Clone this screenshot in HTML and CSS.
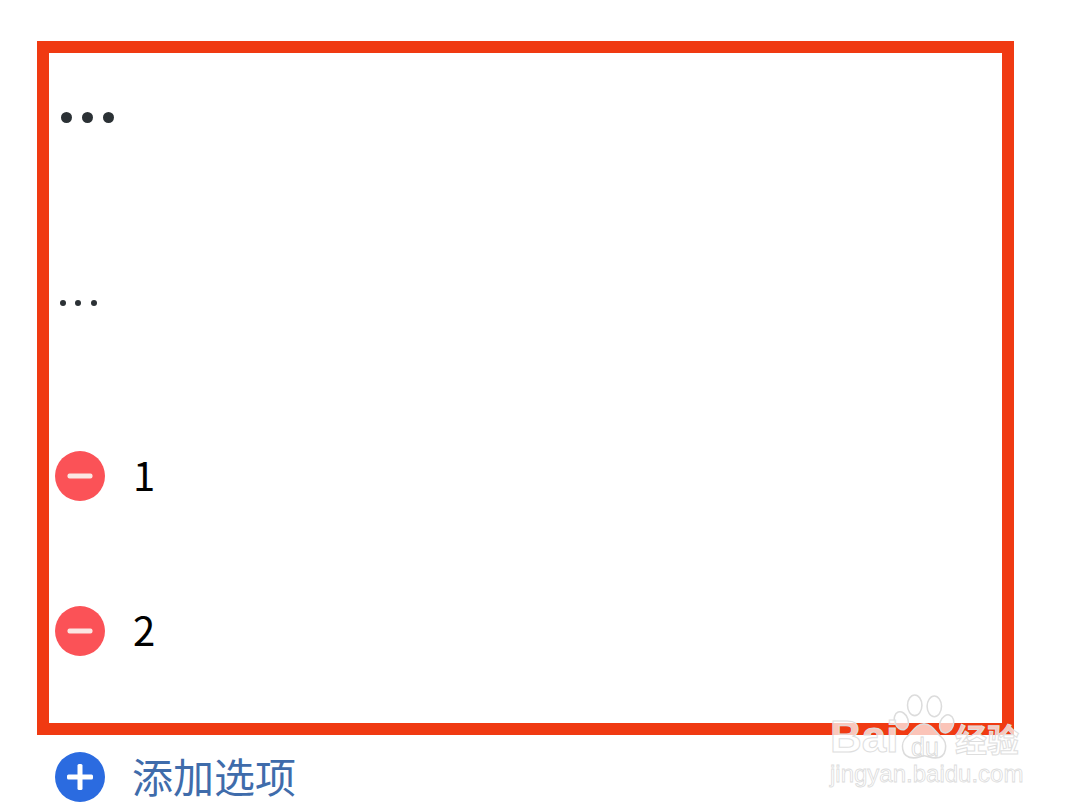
FILE: index.html
```html
<!DOCTYPE html>
<html lang="zh">
<head>
<meta charset="utf-8">
<title>添加选项</title>
<link rel="stylesheet" href="styles.css">
</head>
<body>
<main class="page">
  <section class="frame">
    <div class="dots dots-large"><i></i><i></i><i></i></div>
    <div class="dots dots-small"><i></i><i></i><i></i></div>
    <div class="option option-first">
      <svg class="icon" viewBox="0 0 50 50"><circle cx="25" cy="25" r="25" fill="#fb5257"/><rect x="12.5" y="22.5" width="25" height="5" rx="2" fill="#fbe6e2"/></svg>
      <span class="label">1</span>
    </div>
    <div class="option option-second">
      <svg class="icon" viewBox="0 0 50 50"><circle cx="25" cy="25" r="25" fill="#fb5257"/><rect x="12.5" y="22.5" width="25" height="5" rx="2" fill="#fbe6e2"/></svg>
      <span class="label">2</span>
    </div>
  </section>
  <div class="add">
    <svg class="icon" viewBox="0 0 50 50"><circle cx="25" cy="25" r="25" fill="#2b6be0"/><rect x="12" y="22.5" width="26" height="5" rx="1.5" fill="#fff"/><rect x="22.5" y="12" width="5" height="26" rx="1.5" fill="#fff"/></svg>
    <span class="add-label">添加选项</span>
  </div>
</main>
<div class="watermark">
  <svg class="paw" viewBox="0 0 60 66">
    <g fill="#ffffff" fill-opacity="0.7" stroke="#dcdcdc" stroke-width="1.5">
      <ellipse cx="8" cy="26" rx="6.5" ry="9" transform="rotate(-20 8 26)"/>
      <ellipse cx="21" cy="11" rx="7" ry="10"/>
      <ellipse cx="40" cy="12" rx="7" ry="10"/>
      <ellipse cx="52" cy="29" rx="6.5" ry="9" transform="rotate(20 52 29)"/>
      <path d="M30 29c-8 0-11 8-17 13-6 5-6 20 7 20 5 0 7-2 10-2s6 2 11 2c12 0 12-15 6-20-6-5-9-13-17-13z"/>
    </g>
  </svg>
  <span class="wm-bai">Bai</span>
  <span class="wm-du">du</span>
  <span class="wm-jy">经验</span>
  <span class="wm-url">jingyan.baidu.com</span>
</div>
</body>
</html>
```
FILE: styles.css
```css
* { box-sizing: border-box; }
html, body { margin: 0; padding: 0; }
body {
  width: 1080px;
  height: 810px;
  overflow: hidden;
  background: #ffffff;
  position: relative;
  font-family: "Noto Sans CJK SC", "Noto Sans", sans-serif;
}
.page { padding: 41px 0 0 37px; }
.frame {
  width: 977px;
  height: 694px;
  border: 12px solid #f03a12;
  padding-left: 6px;
  background: #ffffff;
}
.dots { display: flex; align-items: center; }
.dots i { display: block; border-radius: 50%; background: #2b3135; }
.dots-large { margin: 58px 0 0 6px; gap: 10px; height: 12px; }
.dots-large i { width: 11px; height: 11px; }
.dots-small { margin: 177px 0 0 4.5px; gap: 9.5px; height: 6px; }
.dots-small i { width: 6px; height: 6px; }
.option { display: flex; align-items: center; height: 50px; }
.option-first { margin-top: 145px; }
.option-second { margin-top: 105px; }
.icon { display: block; width: 50px; height: 50px; flex: none; }
.label {
  margin-left: 28px;
  font-size: 40px;
  font-weight: 400;
  line-height: 44px;
  padding-bottom: 5px;
  color: #000000;
}
.add {
  display: flex;
  align-items: center;
  height: 50px;
  margin: 17px 0 0 18px;
}
.add-label {
  margin-left: 27px;
  font-size: 41px;
  line-height: 46px;
  padding-bottom: 4px;
  color: #3f6cab;
}
.watermark {
  position: absolute;
  left: 825px;
  top: 690px;
  width: 205px;
  height: 105px;
  pointer-events: none;
}
.paw { position: absolute; left: 68px; top: 4px; width: 62px; height: 68px; }
.wm-bai, .wm-du, .wm-jy, .wm-url {
  position: absolute;
  color: rgba(255, 255, 255, 0.72);
  -webkit-text-stroke: 1px #dedede;
  white-space: nowrap;
}
.wm-bai {
  left: 5px;
  top: 22px;
  font: 700 44px/50px "Liberation Sans", sans-serif;
}
.wm-du {
  left: 86px;
  top: 42px;
  font: 400 25px/30px "Liberation Sans", sans-serif;
  -webkit-text-stroke: 0.8px #d8d8d8;
}
.wm-jy {
  left: 130px;
  top: 28px;
  font: 700 32px/40px "Noto Sans CJK SC", sans-serif;
}
.wm-url {
  left: 5px;
  top: 69px;
  font: 400 24px/30px "Liberation Sans", sans-serif;
  -webkit-text-stroke: 0.8px #dcdcdc;
}
```
